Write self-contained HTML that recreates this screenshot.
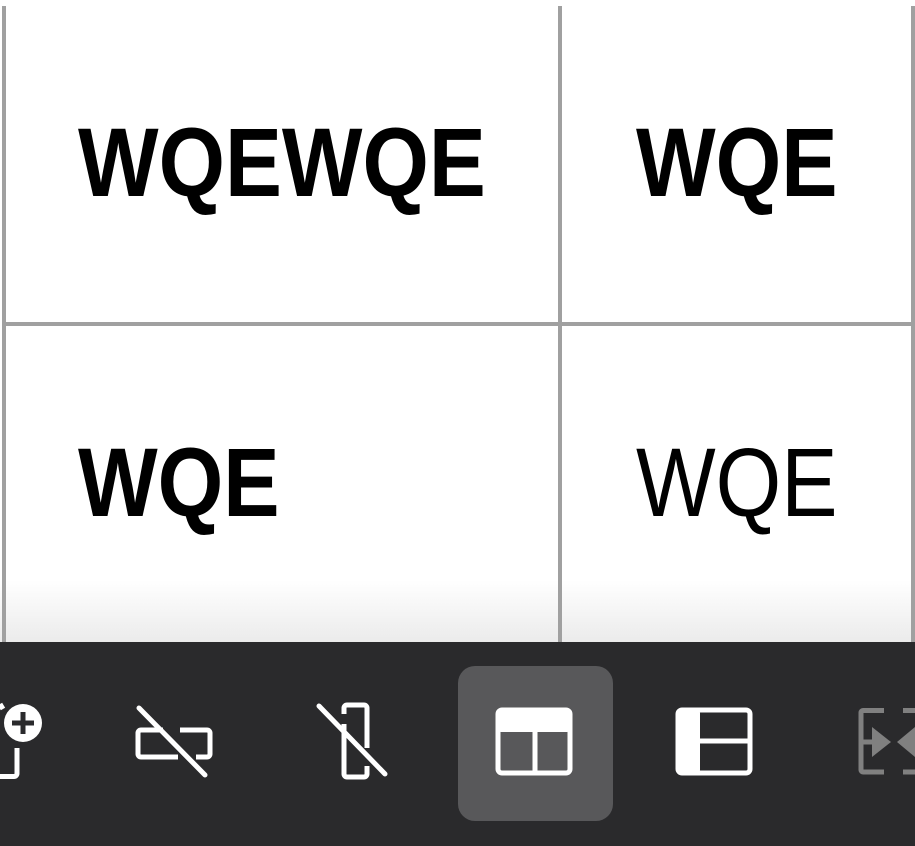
<!DOCTYPE html>
<html><head><meta charset="utf-8"><style>
html,body{margin:0;padding:0;width:915px;height:846px;overflow:hidden;background:#fff;position:relative;font-family:"Liberation Sans",sans-serif}
.vl{position:absolute;top:6px;height:636px;width:4px;background:#a0a0a0}
.hl{position:absolute;left:2px;width:913px;top:322px;height:4px;background:#a0a0a0}
.fade{position:absolute;left:0;top:580px;width:915px;height:62px;background:linear-gradient(rgba(255,255,255,0),rgba(235,235,235,1))}
.t{position:absolute;font-size:97px;font-weight:bold;line-height:1;color:#000;white-space:nowrap;transform-origin:0 0;transform:scaleX(0.875)}
.bar{position:absolute;left:0;top:642px;width:915px;height:204px;background:#2a2a2c}
.sel{position:absolute;left:458px;top:666px;width:155px;height:155px;border-radius:17px;background:#58585a}
svg{position:absolute;left:0;top:0}
</style></head><body>
<div class="fade"></div>
<div class="vl" style="left:2px"></div>
<div class="vl" style="left:558px"></div>
<div class="vl" style="left:911px"></div>
<div class="hl"></div>
<div class="t" style="left:78px;top:114px;transform:scaleX(0.88)">WQEWQE</div>
<div class="t" style="left:636px;top:114px;transform:scaleX(0.87)">WQE</div>
<div class="t" style="left:78px;top:434px;transform:scaleX(0.87)">WQE</div>
<div class="t" style="left:636px;top:434px;font-weight:normal;transform:scaleX(0.87)">WQE</div>
<div class="bar"></div>
<div class="sel"></div>
<svg width="915" height="846" viewBox="0 0 915 846">
 <g fill="none" stroke="#fff" stroke-width="5">
  <path d="M-5 776.5 H14 a3 3 0 0 0 3 -3 V748"/>
  <path d="M0 704 L3 709"/>
  <path d="M163 730 H141 a3 3 0 0 0 -3 3 V754 a3 3 0 0 0 3 3 H178"/>
  <path d="M180 730 H207 a3 3 0 0 1 3 3 V754 a3 3 0 0 1 -3 3 H196"/>
  <path d="M139 708 L205 775" stroke-linecap="round"/>
  <path d="M344 724 V774 a3 3 0 0 0 3 3 H364 a3 3 0 0 0 3 -3 V766"/>
  <path d="M344 714 V708 a3 3 0 0 1 3 -3 H364 a3 3 0 0 1 3 3 V748"/>
  <path d="M319 706 L385 774" stroke-linecap="round"/>
  <rect x="498" y="710" width="72" height="63" rx="4"/>
  <path d="M535 730 V773"/>
  <rect x="678" y="710" width="72" height="63" rx="4"/>
  <path d="M697 741 H750"/>
 </g>
 <circle cx="23" cy="723" r="19" fill="#fff"/>
 <path d="M23 712 V734 M12 723 H34" stroke="#2a2a2c" stroke-width="5"/>
 <rect x="498" y="710" width="72" height="22" rx="3" fill="#fff"/>
 <rect x="678" y="710" width="22" height="63" rx="3" fill="#fff"/>
 <g fill="none" stroke="#808080" stroke-width="5">
  <path d="M884 710.5 H863 a2 2 0 0 0 -2 2 V770 a2 2 0 0 0 2 2 H884"/>
  <path d="M903 710.5 H915 M903 772 H915"/>
  <path d="M863 742 H874"/>
 </g>
 <path d="M872 727 L891 742 L872 757 Z" fill="#808080"/>
 <path d="M915 727 L897 742 L915 757 Z" fill="#808080"/>
</svg>
</body></html>
